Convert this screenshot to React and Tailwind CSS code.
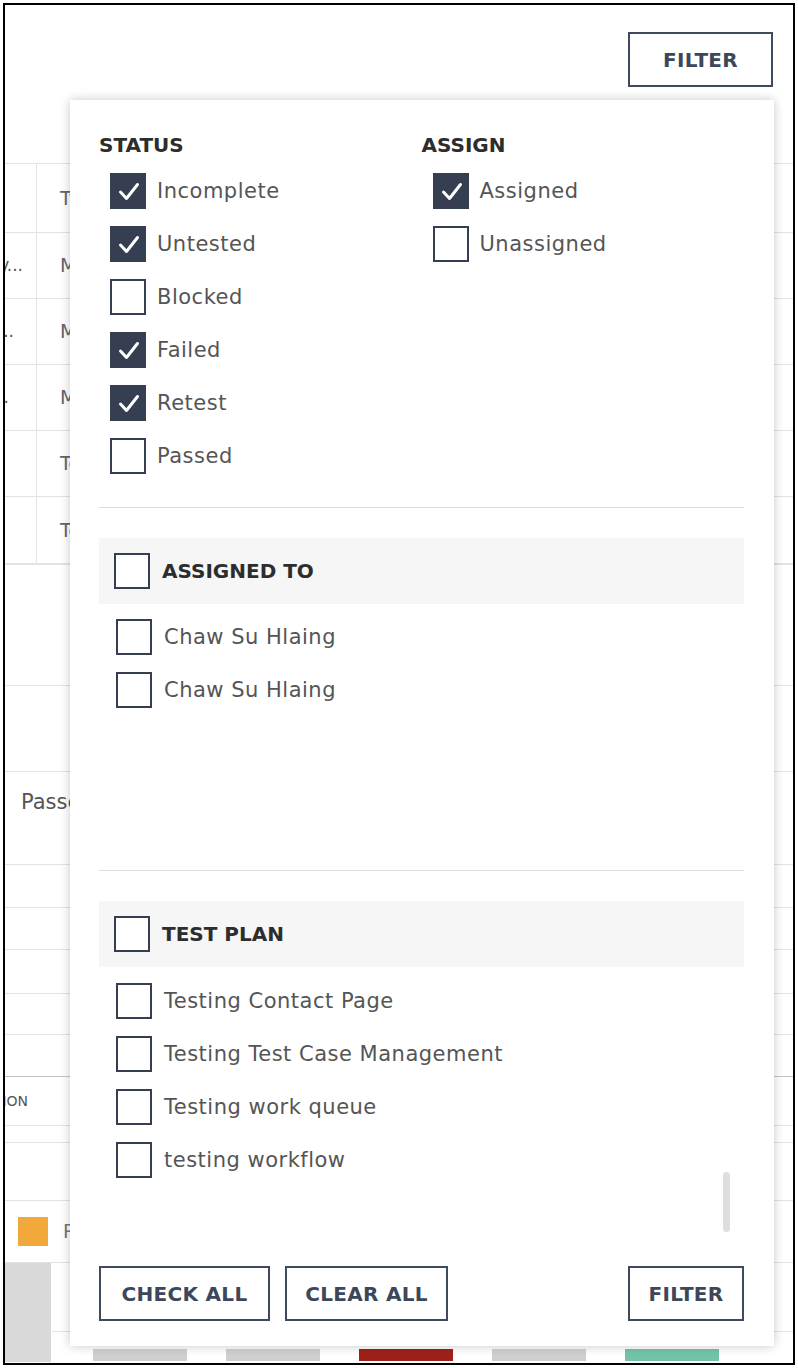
import React from "react";

const STATUS = [
  { label: "Incomplete", on: true },
  { label: "Untested", on: true },
  { label: "Blocked", on: false },
  { label: "Failed", on: true },
  { label: "Retest", on: true },
  { label: "Passed", on: false },
];

const ASSIGN = [
  { label: "Assigned", on: true },
  { label: "Unassigned", on: false },
];

const USERS = ["Chaw Su Hlaing", "Chaw Su Hlaing"];

const PLANS = [
  "Testing Contact Page",
  "Testing Test Case Management",
  "Testing work queue",
  "testing workflow",
];

// rows of the table behind the popup
const TABLE_ROWS = [
  { h: 69, c1: "", pr: 14, c2: "Type" },
  { h: 66, c1: "Regulatory...", pr: 14, c2: "Medium" },
  { h: 66, c1: "Smoke...", pr: 23, c2: "Medium" },
  { h: 66, c1: "Flow.", pr: 28, c2: "Medium" },
  { h: 66, c1: "", pr: 14, c2: "Test" },
  { h: 68, c1: "", pr: 14, c2: "Test", last: true },
];

const LOWER_ROWS = [
  { h: 121 },
  { h: 86 },
  { h: 93, pass: true },
  { h: 43 },
  { h: 42 },
  { h: 44 },
  { h: 41 },
  { h: 42, dark: true },
  { h: 49, on: true },
  { h: 17 },
  { h: 58 },
];

const BARS = ["bg-[#cfcfcf]", "bg-[#cfcfcf]", "bg-[#9e2119]", "bg-[#cfcfcf]", "bg-[#72c3a9]"];

function Box({ on }) {
  if (on) {
    return (
      <span className="flex h-[36px] w-[36px] shrink-0 items-center justify-center bg-[#363f52]">
        <svg width="36" height="36" viewBox="0 0 36 36" fill="none">
          <path d="M10.5 19 L16.5 25.5 L27.5 11.5" stroke="#fff" strokeWidth="3" strokeLinecap="round" strokeLinejoin="round" />
        </svg>
      </span>
    );
  }
  return <span className="h-[36px] w-[36px] shrink-0 border-2 border-[#363f52] bg-white" />;
}

function Option({ label, on }) {
  return (
    <div className="flex h-[36px] items-center gap-[11px]">
      <Box on={on} />
      <span className="text-[21px] leading-none tracking-[0.5px] text-[#555]">{label}</span>
    </div>
  );
}

function GroupBar({ title }) {
  return (
    <div className="flex h-[66px] items-center gap-[12px] bg-[#f6f6f6] pl-[15px]">
      <Box on={false} />
      <span className="text-[20px] font-bold leading-none text-[#2d2d2d]">{title}</span>
    </div>
  );
}

function GroupItem({ label }) {
  return (
    <div className="flex h-[36px] items-center gap-[12px] pl-[17px]">
      <Box on={false} />
      <span className="text-[21px] leading-none tracking-[0.5px] text-[#555]">{label}</span>
    </div>
  );
}

function OutlineButton({ children, className }) {
  return (
    <button
      className={`flex h-[55px] items-center justify-center border-2 border-[#3e4a5e] bg-white text-[20px] font-bold tracking-[0.3px] text-[#3d475a] ${className}`}
    >
      {children}
    </button>
  );
}

export default function App() {
  return (
    <div className="bg-white p-[3px] font-['DejaVu_Sans',sans-serif]">
      <div className="relative h-[1362px] overflow-hidden border-2 border-black bg-white">
        {/* Page header */}
        <div className="flex h-[158px] justify-end pr-[20px] pt-[27px]">
          <OutlineButton className="w-[145px] h-[54px]">FILTER</OutlineButton>
        </div>

        {/* Table behind */}
        <div className="border-t border-[#e3e3e3]">
          {TABLE_ROWS.map((r, i) => (
            <div
              key={i}
              className={`flex ${r.last ? "border-b-2" : "border-b"} border-[#e3e3e3]`}
              style={{ height: r.h }}
            >
              <div
                className="flex w-[32px] items-center justify-end overflow-hidden border-r border-[#e3e3e3] text-[17px] text-[#555]"
                style={{ paddingRight: r.pr - 1 }}
              >
                <span className="whitespace-nowrap">{r.c1}</span>
              </div>
              <div className="flex items-center pl-[23px] text-[19px] text-[#666]">{r.c2}</div>
            </div>
          ))}
          {LOWER_ROWS.map((r, i) => (
            <div
              key={i}
              className={`border-b ${r.dark ? "border-[#c4c4c4]" : "border-[#e3e3e3]"}`}
              style={{ height: r.h }}
            >
              {r.pass && <div className="pl-[16px] pt-[17px] text-[21px] leading-[26px] text-[#555]">Passed</div>}
              {r.on && (
                <div className="flex h-full w-[23px] items-center justify-end overflow-hidden text-[14px] text-[#555]">
                  <span className="whitespace-nowrap">ACTION</span>
                </div>
              )}
            </div>
          ))}
          {/* legend */}
          <div className="flex h-[62px] items-center gap-[15px] border-b border-[#e3e3e3] pl-[13px]">
            <span className="h-[29px] w-[30px] bg-[#f2a93b]" />
            <span className="text-[19px] text-[#777]">Passed</span>
          </div>
          {/* chart */}
          <div className="flex h-[99px]">
            <div className="w-[46px] bg-[#d9d9d9]" />
            <div className="flex flex-1 flex-col border-l border-white">
              <div className="h-[69px] border-b border-[#e3e3e3]" />
              <div className="h-[17px]" />
              <div className="flex h-[12px] gap-[39px] pl-[41px]">
                {BARS.map((b, i) => (
                  <span key={i} className={`w-[94px] ${b}`} />
                ))}
              </div>
            </div>
          </div>
        </div>

        {/* Filter popup */}
        <div className="absolute left-[65px] top-[95px] flex h-[1246px] w-[704px] flex-col bg-white pl-[29px] pr-[30px] pt-[33px] pb-[25px] shadow-[0_0_10px_rgba(0,0,0,0.22)]">
          <div className="grid grid-cols-2">
            <div>
              <div className="h-[24px] text-[20px] font-bold leading-[24px] text-[#2d2d2d]">STATUS</div>
              <div className="mt-[16px] flex flex-col gap-[17px] pl-[11px]">
                {STATUS.map((s) => (
                  <Option key={s.label} {...s} />
                ))}
              </div>
            </div>
            <div>
              <div className="h-[24px] text-[20px] font-bold leading-[24px] text-[#2d2d2d]">ASSIGN</div>
              <div className="mt-[16px] flex flex-col gap-[17px] pl-[11px]">
                {ASSIGN.map((s) => (
                  <Option key={s.label} {...s} />
                ))}
              </div>
            </div>
          </div>

          <div className="mt-[33px] h-px bg-[#dcdcdc]" />

          <div className="mt-[30px]">
            <GroupBar title="ASSIGNED TO" />
            <div className="flex h-[266px] flex-col gap-[17px] pt-[15px]">
              {USERS.map((u, i) => (
                <GroupItem key={i} label={u} />
              ))}
            </div>
          </div>

          <div className="h-px bg-[#dcdcdc]" />

          <div className="mt-[30px]">
            <GroupBar title="TEST PLAN" />
            <div className="flex h-[273px]">
              <div className="flex flex-1 flex-col gap-[17px] pt-[16px]">
                {PLANS.map((p) => (
                  <GroupItem key={p} label={p} />
                ))}
              </div>
              <div className="mr-[14px] flex flex-col justify-end pb-[8px]">
                <span className="h-[60px] w-[7px] rounded-full bg-[#dedede]" />
              </div>
            </div>
          </div>

          <div className="mt-[26px] flex items-center">
            <OutlineButton className="w-[171px]">CHECK ALL</OutlineButton>
            <OutlineButton className="ml-[15px] w-[163px]">CLEAR ALL</OutlineButton>
            <OutlineButton className="ml-auto w-[116px]">FILTER</OutlineButton>
          </div>
        </div>
      </div>
    </div>
  );
}
